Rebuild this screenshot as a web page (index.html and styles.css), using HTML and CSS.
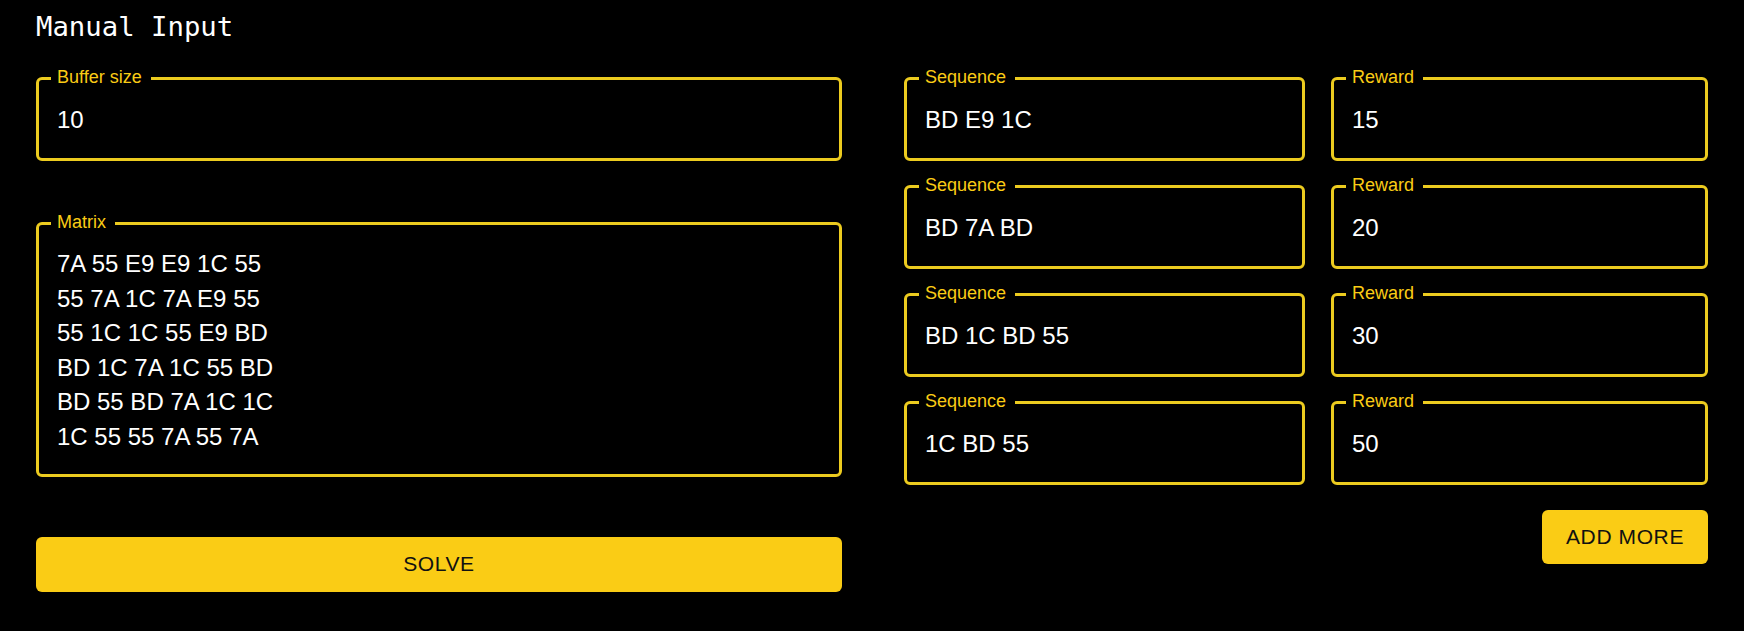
FILE: index.html
```html
<!DOCTYPE html>
<html lang="en">
<head>
<meta charset="utf-8">
<title>Manual Input</title>
<link rel="stylesheet" href="styles.css">
</head>
<body>
<main class="page">
  <h1 class="title">Manual Input</h1>
  <div class="columns">
    <section class="left">
      <div class="field">
        <span class="label">Buffer size</span>
        <div class="value">10</div>
      </div>
      <div class="field field-multi">
        <span class="label">Matrix</span>
        <div class="value multi">7A 55 E9 E9 1C 55
55 7A 1C 7A E9 55
55 1C 1C 55 E9 BD
BD 1C 7A 1C 55 BD
BD 55 BD 7A 1C 1C
1C 55 55 7A 55 7A</div>
      </div>
      <button class="btn btn-wide" type="button">Solve</button>
    </section>
    <section class="right">
      <div class="seq-grid">
        <div class="field"><span class="label">Sequence</span><div class="value">BD E9 1C</div></div>
        <div class="field"><span class="label">Reward</span><div class="value">15</div></div>
        <div class="field"><span class="label">Sequence</span><div class="value">BD 7A BD</div></div>
        <div class="field"><span class="label">Reward</span><div class="value">20</div></div>
        <div class="field"><span class="label">Sequence</span><div class="value">BD 1C BD 55</div></div>
        <div class="field"><span class="label">Reward</span><div class="value">30</div></div>
        <div class="field"><span class="label">Sequence</span><div class="value">1C BD 55</div></div>
        <div class="field"><span class="label">Reward</span><div class="value">50</div></div>
      </div>
      <div class="actions">
        <button class="btn" type="button">Add more</button>
      </div>
    </section>
  </div>
</main>
</body>
</html>
```

FILE: styles.css
```css
* { box-sizing: border-box; }

html, body {
  margin: 0;
  background: #000;
}

body {
  font-family: "Liberation Sans", Arial, sans-serif;
  color: #fff;
}

.page {
  width: 1744px;
  height: 631px;
  padding: 13px 36px 0 36px;
}

.title {
  margin: 0 0 37px 0;
  font-family: "DejaVu Sans Mono", monospace;
  font-weight: 400;
  font-size: 27.3px;
  line-height: 27px;
  color: #fff;
}

.columns {
  display: grid;
  grid-template-columns: 806px 804px;
  column-gap: 62px;
}

.left {
  display: flex;
  flex-direction: column;
}

.field {
  position: relative;
  height: 84px;
  border: 3px solid #eccb1f;
  border-radius: 6px;
  padding: 3px 18px 0 18px;
  display: flex;
  align-items: center;
}

.field-multi {
  height: 255px;
  margin-top: 61px;
  align-items: flex-start;
  padding-top: 22px;
}

.label {
  position: absolute;
  left: 12px;
  top: -12px;
  padding: 0 9px 0 6px;
  background: #000;
  color: #facc15;
  font-size: 18px;
  line-height: 18px;
}

.value {
  font-size: 24px;
  line-height: 34.5px;
  color: #fff;
}

.multi {
  white-space: pre-line;
}

.btn {
  font-family: "Liberation Sans", Arial, sans-serif;
  font-size: 21px;
  font-weight: 400;
  letter-spacing: 0.6px;
  text-transform: uppercase;
  line-height: 36.75px;
  color: #111;
  background: #facc15;
  border: none;
  border-radius: 6px;
  padding: 9px 24px;
  height: 55px;
}

.btn-wide {
  width: 100%;
  margin-top: 60px;
}

.seq-grid {
  display: grid;
  grid-template-columns: 401fr 377fr;
  column-gap: 26px;
  row-gap: 24px;
}

.actions {
  display: flex;
  justify-content: flex-end;
  margin-top: 25px;
}

.actions .btn {
  height: 54px;
}
```
